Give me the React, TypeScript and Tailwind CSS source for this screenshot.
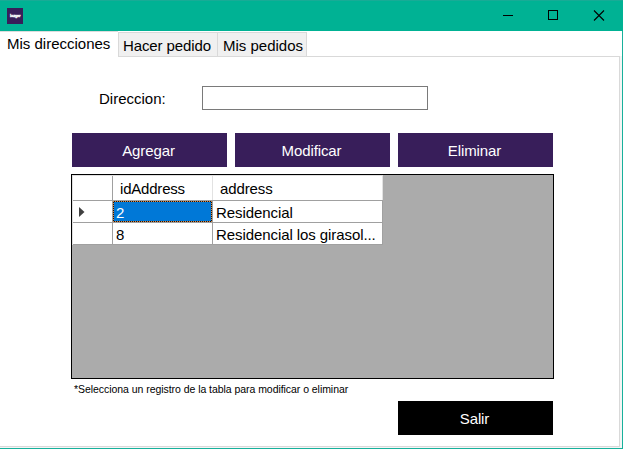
import React from "react";

const rows = [
  { id: "2", address: "Residencial", selected: true },
  { id: "8", address: "Residencial los girasol...", selected: false },
];

function TitleBar() {
  return (
    <header className="flex h-[31px] shrink-0 items-center justify-between border-t border-[#18ab96] bg-[#00b294] pl-[7px]">
      <div className="flex h-4 w-4 items-center justify-center bg-[#381e5a] pb-px text-[4px] leading-none font-bold tracking-[-0.45px] text-white [-webkit-text-stroke:0.3px_white]">
        burger
      </div>
      <svg width="138" height="30" viewBox="0 0 138 30" fill="none" stroke="#000" shapeRendering="crispEdges">
        <path d="M18 14.5H28" />
        <rect x="63.5" y="9.5" width="9" height="9" />
        <path d="M109 9.5L119 19.5M119 9.5L109 19.5" shapeRendering="auto" strokeWidth="1.1" />
      </svg>
    </header>
  );
}

function Tabs() {
  return (
    <nav className="flex h-[25px] shrink-0 items-end">
      <div className="z-10 -mb-px flex h-[26px] w-[118px] items-center border-t border-[#dcdcdc] bg-white pb-[2px] pl-[7px]">
        Mis direcciones
      </div>
      <div className="flex h-6 w-[99px] items-center border-t border-l border-[#d9d9d9] bg-[#f0f0f0] pt-px pl-1 tracking-[-0.1px]">
        Hacer pedido
      </div>
      <div className="flex h-6 w-[90px] items-center border-x border-t border-[#d9d9d9] bg-[#f0f0f0] pt-px pl-[5px]">
        Mis pedidos
      </div>
    </nav>
  );
}

function Button({ label, dark = false }: { label: string; dark?: boolean }) {
  return (
    <button
      className={`flex h-[34px] w-[155px] items-center justify-center pt-px pr-[2px] tracking-[-0.1px] text-white ${
        dark ? "bg-black" : "bg-[#381e5a]"
      }`}
    >
      {label}
    </button>
  );
}

function AddressGrid() {
  return (
    <div className="mt-[7px] -ml-px h-[205px] w-[483px] border border-black bg-[#ababab]">
      <div className="w-[311px] border-t border-l border-[#e0e0e0] bg-white">
        <div className="flex h-[25px] border-b border-[#a0a0a0]">
          <div className="w-10 border-r border-[#a0a0a0]" />
          <div className="flex w-[100px] items-center border-r border-[#e2e2e2] pt-px pl-[7px] tracking-[-0.2px]">
            idAddress
          </div>
          <div className="flex w-[170px] items-center border-r border-[#e2e2e2] pt-px pl-[7px] tracking-[-0.1px]">
            address
          </div>
        </div>
        {rows.map((row) => (
          <div key={row.id} className="flex h-[22px] border-b border-[#a0a0a0]">
            <div className="flex w-10 items-center border-r border-[#a0a0a0] pl-[6px]">
              {row.selected && (
                <svg width="6" height="10" viewBox="0 0 6 10" fill="#404040">
                  <path d="M0 0L5.5 5L0 10Z" />
                </svg>
              )}
            </div>
            <div
              className={`flex w-[100px] items-center border-r border-[#a0a0a0] ${
                row.selected ? "bg-[#10141c] text-white" : ""
              }`}
            >
              <span
                className={`flex h-full w-full items-center border border-dotted pt-px pl-[2px] ${
                  row.selected ? "border-[#e08a3c] bg-[#0078d7] bg-clip-padding" : "border-transparent"
                }`}
              >
                {row.id}
              </span>
            </div>
            <div className="flex w-[170px] items-center border-r border-[#a0a0a0] pt-px pl-[3px] tracking-[-0.08px] whitespace-nowrap">
              {row.address}
            </div>
          </div>
        ))}
      </div>
    </div>
  );
}

export default function App() {
  return (
    <div className="flex h-[449px] w-[623px] flex-col overflow-hidden bg-white font-['Liberation_Sans',Arial,sans-serif] text-[15px] leading-[17px] text-black">
      <TitleBar />
      <div className="flex flex-1 flex-col border-r border-b border-[#18b19c]">
        <Tabs />
        <div className="flex flex-1 bg-[#f5f5f5] pr-[2px] pb-px">
          <main className="flex-1 border-t border-r border-b border-[#d9d9d9] bg-white pt-[29px] pl-[72px]">
            <div className="flex items-center">
              <label htmlFor="direccion" className="w-[130px] pl-[27px]">
                Direccion:
              </label>
              <input id="direccion" className="h-6 w-[226px] border border-[#7a7a7a] bg-white px-1 outline-none" />
            </div>
            <div className="mt-[23px] flex gap-2">
              <Button label="Agregar" />
              <Button label="Modificar" />
              <Button label="Eliminar" />
            </div>
            <AddressGrid />
            <div className="flex h-[22px] items-center pb-[3px] pl-[2px] text-[10.5px] leading-3 tracking-[-0.05px]">
              *Selecciona un registro de la tabla para modificar o eliminar
            </div>
            <div className="pl-[326px]">
              <Button label="Salir" dark />
            </div>
          </main>
        </div>
      </div>
    </div>
  );
}
